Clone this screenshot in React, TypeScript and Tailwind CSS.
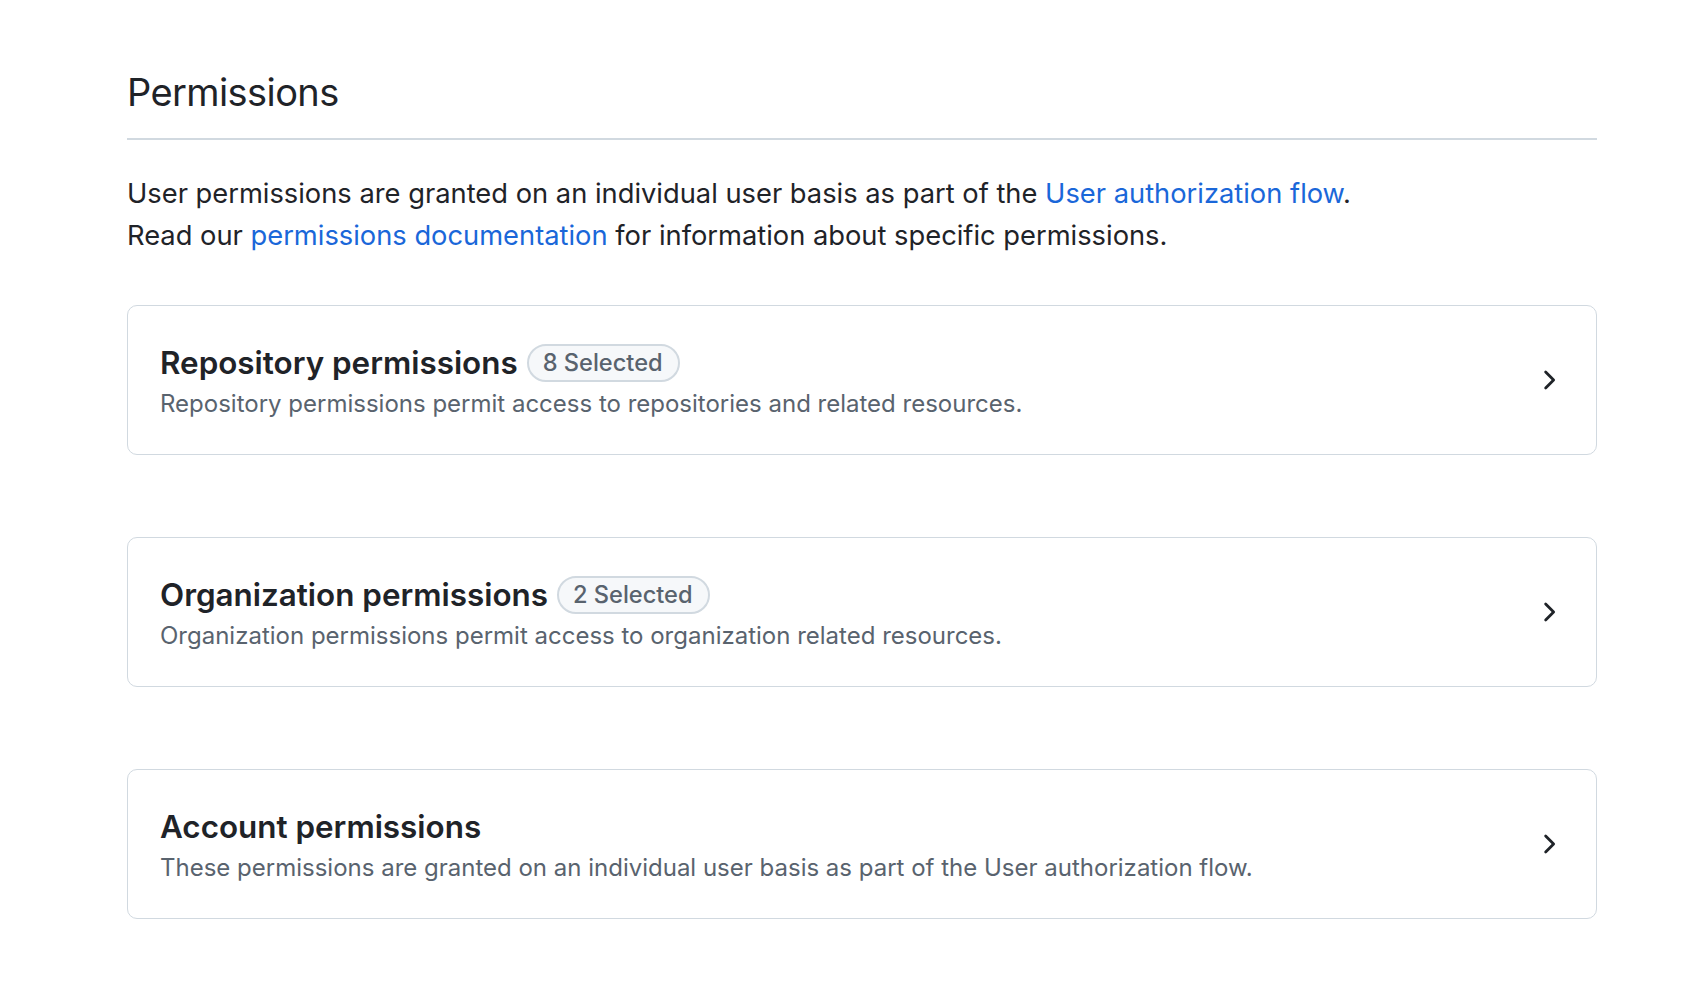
import React from "react";

function Chevron() {
  return (
    <svg width="30" height="30" viewBox="0 0 16 16" fill="#1f2328" aria-hidden="true">
      <path d="M6.22 3.22a.75.75 0 0 1 1.06 0l4.25 4.25a.75.75 0 0 1 0 1.06l-4.25 4.25a.751.751 0 0 1-1.042-.018.751.751 0 0 1-.018-1.042L9.94 8 6.22 4.28a.75.75 0 0 1 0-1.06Z" />
    </svg>
  );
}

function Card({ title, badge, desc }: { title: string; badge?: string; desc: string }) {
  return (
    <div className="flex h-[150px] items-center justify-between rounded-[10px] border border-[#d1d9e0] bg-white pl-[32px] pr-[33px]">
      <div className="flex flex-col pt-[6px]">
        <div className="flex h-[42px] items-center gap-[9px]">
          <span className="text-[31.4px] font-semibold leading-[42px] text-[#1f2328]">{title}</span>
          {badge && (
            <span className="flex h-[38px] items-center rounded-full border-2 border-[#d1d9e0] bg-[#f6f8fa] pl-[14px] pr-[15px] text-[23.6px] font-medium text-[#59636e]">
              {badge}
            </span>
          )}
        </div>
        <div className="text-[24px] leading-[40px] text-[#59636e]">{desc}</div>
      </div>
      <Chevron />
    </div>
  );
}

export default function App() {
  return (
    <div className="min-h-[1000px] bg-white font-['Inter','Liberation_Sans',sans-serif] text-[#1f2328]">
      <div className="ml-[127px] w-[1470px] pt-[62px]">
        <div className="border-b-2 border-[#d1d9e0] pb-[16px]">
          <h2 className="text-[38px] font-normal leading-[60px] tracking-[-0.6px]">Permissions</h2>
        </div>
        <p className="mt-[33px] text-[27.3px] leading-[42px]">
          User permissions are granted on an individual user basis as part of the{" "}
          <a className="text-[#1a67d9]">User authorization flow</a>.
          <br />
          Read our <a className="text-[#1a67d9]">permissions documentation</a> for information about specific permissions.
        </p>
        <div className="mt-[48px] flex flex-col gap-[82px]">
          <Card
            title="Repository permissions"
            badge="8 Selected"
            desc="Repository permissions permit access to repositories and related resources."
          />
          <Card
            title="Organization permissions"
            badge="2 Selected"
            desc="Organization permissions permit access to organization related resources."
          />
          <Card
            title="Account permissions"
            desc="These permissions are granted on an individual user basis as part of the User authorization flow."
          />
        </div>
      </div>
    </div>
  );
}
